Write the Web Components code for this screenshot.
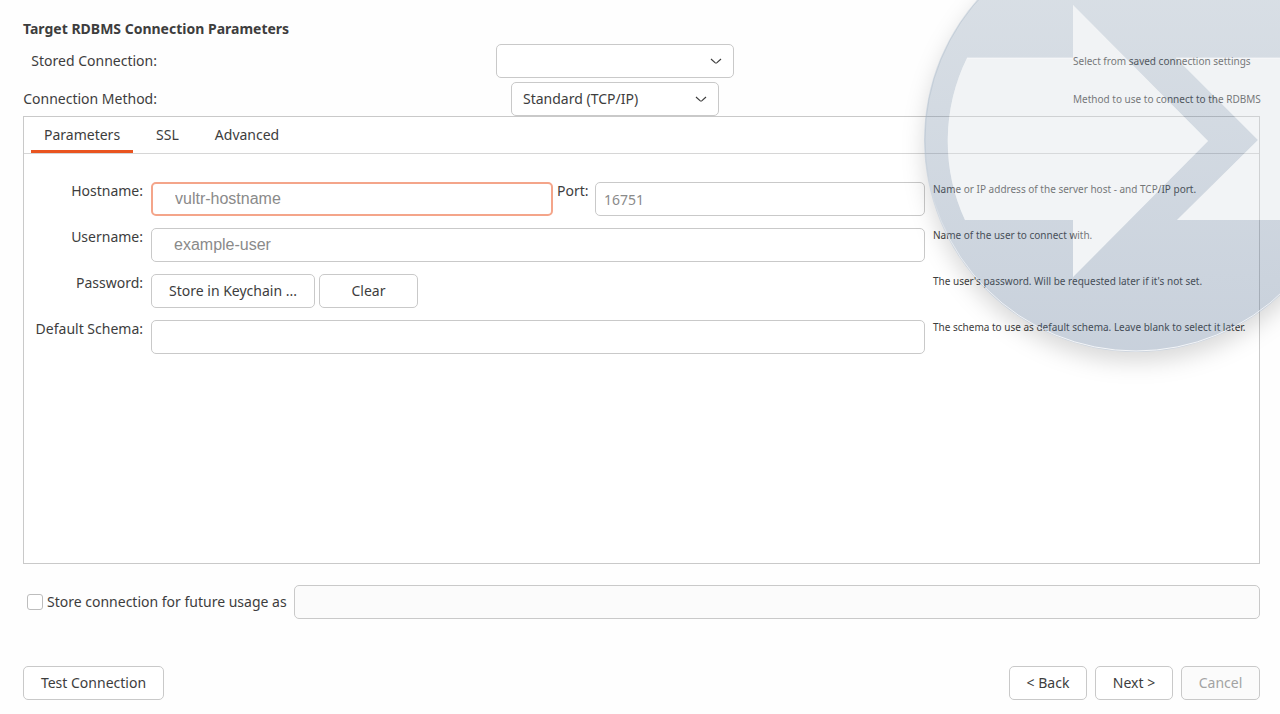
<!DOCTYPE html>
<html lang="en">
<head>
<meta charset="utf-8">
<title>Target RDBMS Connection Parameters</title>
<style>
    body {
        margin: 0;
        background: #fefefe;
        color: #3d3d3d;
        font: 14px/20px "Noto Sans", "Open Sans", sans-serif;
        --line: #c9c9c9;
        --accent: #e95420;
        --hint-font: 10px/14px "Noto Sans", "Open Sans", sans-serif;
    }
</style>
</head>
<body>
<wizard-page heading="Target RDBMS Connection Parameters">
    <select-row slot="head" label="Stored Connection:" size="238" hint="Select from saved connection settings"></select-row>
    <select-row slot="head" label="Connection Method:" size="208" value="Standard (TCP/IP)" hint="Method to use to connect to the RDBMS"></select-row>
    <tab-panel tabs="Parameters,SSL,Advanced">
        <field-row label="Hostname:" value="vultr-hostname" look="active sans" hint="Name or IP address of the server host - and TCP/IP port.">
            <port-field value="16751"></port-field>
        </field-row>
        <field-row label="Username:" value="example-user" look="sans" hint="Name of the user to connect with."></field-row>
        <field-row label="Password:" group hint="The user's password. Will be requested later if it's not set.">
            <push-button style="--width: 164px">Store in Keychain ...</push-button>
            <push-button style="--width: 99px">Clear</push-button>
        </field-row>
        <field-row label="Default Schema:" value="" hint="The schema to use as default schema. Leave blank to select it later."></field-row>
    </tab-panel>
    <store-row slot="foot" label="Store connection for future usage as"></store-row>
    <push-button slot="left" style="--width: 141px">Test Connection</push-button>
    <push-button slot="right" style="--width: 78px">&lt; Back</push-button>
    <push-button slot="right" style="--width: 78px">Next &gt;</push-button>
    <push-button slot="right" style="--width: 79px" disabled>Cancel</push-button>
</wizard-page>

<script>
// shared by every element that shows a text box
const inputStyle = `
    input[type=text] {
        box-sizing: border-box;
        width: 100%;
        min-width: 0;
        height: 34px;
        margin: 0;
        padding: 0 8px;
        border: 1px solid var(--line);
        border-radius: 5px;
        background: #fff;
        color: #8a8a8a;
        font: inherit;
        outline: none;
    }
`;

class WizardPage extends HTMLElement {
    constructor() {
        super();
        this.attachShadow({ mode: 'open' });
    }

    connectedCallback() {
        this.shadowRoot.innerHTML = `
            <style>
                :host {
                    display: flex;
                    flex-direction: column;
                    position: relative;
                    box-sizing: border-box;
                    min-height: 100vh;
                    padding: 19px 20px 14px 23px;
                }
                h1 {
                    margin: 0 0 5px;
                    font-size: 14px;
                    line-height: 20px;
                }
                .head {
                    display: grid;
                    gap: 4px;
                }
                ::slotted(tab-panel) {
                    flex: 1;
                }
                .foot {
                    margin: 21px 0 47px;
                }
                .buttons, .right {
                    display: flex;
                    gap: 8px;
                }
                .buttons {
                    justify-content: space-between;
                }
                /* the emblem is a translucent layer over the controls */
                emblem-arrow {
                    position: absolute;
                    top: 0;
                    right: 0;
                    pointer-events: none;
                }
            </style>
            <h1>${this.getAttribute('heading')}</h1>
            <div class="head"><slot name="head"></slot></div>
            <slot></slot>
            <div class="foot"><slot name="foot"></slot></div>
            <div class="buttons">
                <slot name="left"></slot>
                <div class="right"><slot name="right"></slot></div>
            </div>
            <emblem-arrow></emblem-arrow>
        `;
    }
}

class SelectRow extends HTMLElement {
    constructor() {
        super();
        this.attachShadow({ mode: 'open' });
    }

    connectedCallback() {
        this.shadowRoot.innerHTML = `
            <style>
                :host {
                    display: grid;
                    grid-template-columns: 134px 1fr 187px;
                    align-items: center;
                }
                label {
                    text-align: right;
                    white-space: nowrap;
                }
                .box {
                    display: grid;
                    justify-self: center;
                    align-items: center;
                    width: ${this.getAttribute('size')}px;
                }
                select, svg {
                    grid-area: 1 / 1;
                }
                select {
                    appearance: none;
                    box-sizing: border-box;
                    width: 100%;
                    height: 34px;
                    margin: 0;
                    padding: 0 11px;
                    border: 1px solid var(--line);
                    border-radius: 5px;
                    background: #fff;
                    color: inherit;
                    font: inherit;
                }
                svg {
                    justify-self: end;
                    margin-right: 12px;
                    pointer-events: none;
                }
                .hint {
                    font: var(--hint-font);
                    white-space: nowrap;
                }
            </style>
            <label for="choice">${this.getAttribute('label')}</label>
            <div class="box">
                <select id="choice"><option>${this.getAttribute('value') || ''}</option></select>
                <svg width="12" height="8" viewBox="0 0 12 8" fill="none" stroke="#3d3d3d" stroke-width="1.2">
                    <path d="M1 2 L5 5.6 Q6 6.4 7 5.6 L11 2"/>
                </svg>
            </div>
            <span class="hint">${this.getAttribute('hint')}</span>
        `;
    }
}

class TabPanel extends HTMLElement {
    constructor() {
        super();
        this.attachShadow({ mode: 'open' });
    }

    connectedCallback() {
        const tabs = this.getAttribute('tabs').split(',');
        this.shadowRoot.innerHTML = `
            <style>
                :host {
                    display: block;
                    border: 1px solid var(--line);
                    background: #fff;
                }
                nav {
                    display: flex;
                    gap: 10px;
                    padding-left: 7px;
                    border-bottom: 1px solid #d6d6d6;
                }
                button {
                    height: 36px;
                    padding: 3px 13px 0;
                    border: 0;
                    border-bottom: 3px solid transparent;
                    background: none;
                    color: inherit;
                    font: inherit;
                }
                button[aria-selected=true] {
                    border-color: var(--accent);
                }
                .rows {
                    display: grid;
                    gap: 12px;
                    padding: 28px 8px 28px 7px;
                }
            </style>
            <nav role="tablist">
                ${tabs.map((tab, i) => `<button role="tab" aria-selected="${i === 0}">${tab}</button>`).join('')}
            </nav>
            <div class="rows" role="tabpanel"><slot></slot></div>
        `;
        this.shadowRoot.querySelector('nav').addEventListener('click', this.selectTab.bind(this));
    }

    selectTab(event) {
        const picked = event.target.closest('button');
        if (!picked) return;
        this.shadowRoot.querySelectorAll('button').forEach(tab => {
            tab.setAttribute('aria-selected', tab === picked);
        });
    }
}

class FieldRow extends HTMLElement {
    constructor() {
        super();
        this.attachShadow({ mode: 'open' });
    }

    connectedCallback() {
        const label = this.getAttribute('label');
        const group = this.hasAttribute('group');
        this.shadowRoot.innerHTML = `
            <style>
                ${inputStyle}
                :host {
                    display: grid;
                    grid-template-columns: 112px 1fr 318px;
                    gap: 8px;
                }
                .label {
                    line-height: 18px;
                    text-align: right;
                    white-space: nowrap;
                }
                .controls {
                    display: flex;
                    gap: 4px;
                    min-width: 0;
                }
                input[type=text] {
                    flex: 1 1 402px;
                }
                input.sans {
                    padding: 0 22px;
                    font: 16px/20px "Liberation Sans", Arial, sans-serif;
                }
                input.active {
                    border: 2px solid #f4a58a;
                }
                ::slotted(port-field) {
                    flex: 1 1 368px;
                }
                .hint {
                    font: var(--hint-font);
                    white-space: nowrap;
                }
            </style>
            ${group ? `<span class="label" id="name">${label}</span>` : `<label class="label" for="field">${label}</label>`}
            <div class="controls" ${group ? 'role="group" aria-labelledby="name"' : ''}>
                ${group ? '' : `<input type="text" id="field" class="${this.getAttribute('look') || ''}" value="${this.getAttribute('value')}">`}
                <slot></slot>
            </div>
            <span class="hint">${this.getAttribute('hint')}</span>
        `;
    }
}

class PortField extends HTMLElement {
    constructor() {
        super();
        this.attachShadow({ mode: 'open' });
    }

    connectedCallback() {
        this.shadowRoot.innerHTML = `
            <style>
                ${inputStyle}
                :host {
                    display: grid;
                    grid-template-columns: 34px 1fr;
                    gap: 4px;
                }
                label {
                    line-height: 18px;
                }
            </style>
            <label for="port">Port:</label>
            <input type="text" id="port" value="${this.getAttribute('value')}">
        `;
    }
}

class StoreRow extends HTMLElement {
    constructor() {
        super();
        this.attachShadow({ mode: 'open' });
    }

    connectedCallback() {
        this.shadowRoot.innerHTML = `
            <style>
                ${inputStyle}
                :host {
                    display: grid;
                    grid-template-columns: 16px 243px 1fr;
                    gap: 4px;
                    align-items: center;
                    padding-left: 4px;
                }
                label {
                    white-space: nowrap;
                }
                input[type=checkbox] {
                    appearance: none;
                    box-sizing: border-box;
                    width: 16px;
                    height: 16px;
                    margin: 0;
                    border: 1px solid #bdbdbd;
                    border-radius: 3px;
                    background: #fff;
                }
                input[type=checkbox]:checked {
                    background: var(--accent);
                }
                input[type=text]:disabled {
                    background: #fbfbfb;
                }
            </style>
            <input type="checkbox" id="store">
            <label for="store">${this.getAttribute('label')}</label>
            <input type="text" aria-label="Connection name" disabled>
        `;
        const name = this.shadowRoot.querySelector('input[type=text]');
        this.shadowRoot.getElementById('store').addEventListener('change', event => {
            name.disabled = !event.target.checked;
        });
    }
}

class PushButton extends HTMLElement {
    constructor() {
        super();
        this.attachShadow({ mode: 'open' });
    }

    connectedCallback() {
        this.shadowRoot.innerHTML = `
            <style>
                :host {
                    display: block;
                }
                button {
                    box-sizing: border-box;
                    min-width: var(--width);
                    height: 34px;
                    padding: 0 8px;
                    border: 1px solid var(--line);
                    border-radius: 5px;
                    background: #fff;
                    color: inherit;
                    font: inherit;
                    white-space: nowrap;
                }
                button:disabled {
                    background: #fbfbfb;
                    color: #a3a3a3;
                }
            </style>
            <button ${this.hasAttribute('disabled') ? 'disabled' : ''}><slot></slot></button>
        `;
    }
}

class EmblemArrow extends HTMLElement {
    constructor() {
        super();
        this.attachShadow({ mode: 'open' });
    }

    connectedCallback() {
        // left part is the arrow, right part is what remains behind its outline
        const arrow = 'M967 58 H1073 V5 L1208 141 L1073 277 V220 H965 A189 189 0 0 1 967 58 Z';
        const tail = 'M1176 58 H1307 A189 189 0 0 1 1307 220 H1177 L1258 140 Z';
        this.shadowRoot.innerHTML = `
            <style>
                :host {
                    display: block;
                }
                svg {
                    display: block;
                }
            </style>
            <svg width="400" height="400" viewBox="880 0 400 400" aria-hidden="true">
                <defs>
                    <linearGradient id="disc" gradientUnits="userSpaceOnUse" x1="0" y1="0" x2="0" y2="352">
                        <stop offset="0" stop-color="#8095ab"/>
                        <stop offset="1" stop-color="#4a668a"/>
                    </linearGradient>
                    <linearGradient id="rim" gradientUnits="userSpaceOnUse" x1="0" y1="0" x2="0" y2="352">
                        <stop offset=".4" stop-color="#a9b8c6" stop-opacity=".4"/>
                        <stop offset=".7" stop-color="#fff" stop-opacity=".5"/>
                        <stop offset="1" stop-color="#fff" stop-opacity=".8"/>
                    </linearGradient>
                    <filter id="soft" filterUnits="userSpaceOnUse" x="860" y="-140" width="560" height="580">
                        <feGaussianBlur stdDeviation="11"/>
                    </filter>
                    <mask id="outside" maskUnits="userSpaceOnUse" x="860" y="-140" width="560" height="580">
                        <rect x="860" y="-140" width="560" height="580" fill="#fff"/>
                        <circle cx="1136" cy="140" r="212" fill="#000"/>
                    </mask>
                </defs>
                <g mask="url(#outside)">
                    <circle cx="1136" cy="150" r="212" fill="#000" fill-opacity=".15" filter="url(#soft)"/>
                </g>
                <path fill="url(#disc)" fill-opacity=".3" fill-rule="evenodd"
                    d="M924 140 A212 212 0 1 1 1348 140 A212 212 0 1 1 924 140 Z ${arrow} ${tail}"/>
                <path fill="#dae0e6" fill-opacity=".35" d="${arrow} ${tail}"/>
                <path fill="none" stroke="#fff" stroke-opacity=".6" d="M967 58 H1073 M1176 58 H1280"/>
                <circle cx="1136" cy="140" r="211" fill="none" stroke="url(#rim)"/>
            </svg>
        `;
    }
}

customElements.define('wizard-page', WizardPage);
customElements.define('select-row', SelectRow);
customElements.define('tab-panel', TabPanel);
customElements.define('field-row', FieldRow);
customElements.define('port-field', PortField);
customElements.define('store-row', StoreRow);
customElements.define('push-button', PushButton);
customElements.define('emblem-arrow', EmblemArrow);
</script>
</body>
</html>
